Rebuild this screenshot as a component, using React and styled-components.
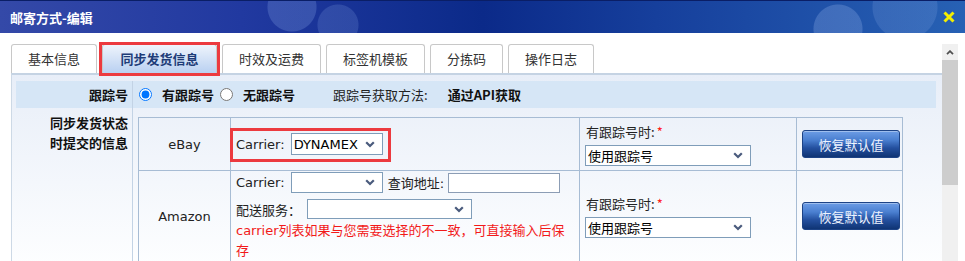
import React from 'react'
import styled, { createGlobalStyle } from 'styled-components'

const GlobalStyle = createGlobalStyle`
  html, body {
    margin: 0;
    background: #fff;
  }
  body {
    font-family: "DejaVu Sans", "Noto Sans CJK SC", sans-serif;
    font-size: 13px;
    color: #222;
  }
`

const Window = styled.div`
  width: 965px;
  height: 261px;
  overflow: hidden;
`

const TitleBar = styled.div`
  height: 33px;
  box-sizing: border-box;
  border-top: 1px solid #0a1e66;
  display: flex;
  align-items: center;
  justify-content: space-between;
  padding: 0 10px;
  background:
    radial-gradient(circle at 292px 6px, rgba(130, 160, 225, 0.28) 0 24px, transparent 25px),
    radial-gradient(circle at 338px 24px, rgba(130, 160, 225, 0.22) 0 20px, transparent 21px),
    radial-gradient(circle at 838px 28px, rgba(150, 180, 235, 0.28) 0 24px, transparent 25px),
    radial-gradient(circle at 905px 6px, rgba(150, 180, 235, 0.18) 0 32px, transparent 33px),
    linear-gradient(90deg, #3449a8 0%, #2139a0 25%, #0b2a89 50%, #163f9c 68%, #2761b4 100%);
`

const Title = styled.h1`
  margin: 0;
  font-family: "Noto Sans CJK SC", sans-serif;
  font-size: 13px;
  font-weight: bold;
  color: #fff;
`

const CloseButton = styled.button`
  border: 0;
  padding: 0;
  background: transparent;
  display: flex;
  cursor: pointer;
`

const Body = styled.div`
  display: flex;
  height: 228px;
  padding-top: 11px;
  box-sizing: border-box;
`

const Main = styled.div`
  margin-left: 11px;
  width: 931px;
  flex: none;
`

const TabList = styled.div`
  display: flex;
  gap: 5px;
  position: relative;
  z-index: 2;
`

const Tab = styled.div`
  position: relative;
  height: 29px;
  box-sizing: border-box;
  line-height: 28px;
  padding: 0 ${p => (p.$active ? 17.5 : 16)}px;
  border: 1px solid #c8c8c8;
  border-bottom: 0;
  border-radius: 3px 3px 0 0;
  background: ${p => (p.$active ? 'linear-gradient(#eef4fc, #b9d0f1)' : '#fff')};
  color: ${p => (p.$active ? '#1e3c78' : '#333')};
  font-family: "Noto Sans CJK SC", sans-serif;
  font-weight: ${p => (p.$active ? 'bold' : 'normal')};
  white-space: nowrap;

  ${p => p.$marked && `
    &::after {
      content: "";
      position: absolute;
      top: -3px;
      left: -4px;
      right: -4px;
      bottom: -3px;
      border: 3px solid #ec3a3f;
    }
  `}
`

const Panel = styled.div`
  border-top: 2px solid #c5d3e3;
  border-left: 1px solid #cdd9e6;
  padding: 6px 6px 0 4px;
  height: 200px;
  background: linear-gradient(180deg, #e8eef8 0%, #fdfeff 190px);
`

const FormGrid = styled.div`
  display: grid;
  grid-template-columns: 117px 1fr;
`

const LabelCell = styled.div`
  box-sizing: border-box;
  border-right: 1px solid #c3d3e5;
  text-align: right;
  padding: ${p => (p.$band ? '0' : '5px')} 4px 0 0;
  line-height: ${p => (p.$band ? '27px' : '20px')};
  font-family: "Noto Sans CJK SC", sans-serif;
  font-weight: bold;
  color: #111;
  background: ${p => (p.$band ? '#d6e6f6' : 'transparent')};
`

const BandContent = styled.div`
  display: flex;
  align-items: center;
  height: 27px;
  padding-left: 6px;
  background: #d6e6f6;
  font-family: "Noto Sans CJK SC", sans-serif;
`

const RadioLabel = styled.label`
  display: inline-flex;
  align-items: center;
  gap: 10px;
  font-weight: bold;
  color: #111;
  margin-right: ${p => p.$gap || 0}px;
`

const Radio = styled.input`
  margin: 0;
  width: 13px;
  height: 13px;
`

const Plain = styled.span`
  color: #222;
  margin-right: ${p => p.$gap || 0}px;
`

const Strong = styled.span`
  font-weight: bold;
  color: #111;
`

const SyncContent = styled.div`
  padding: 9px 0 0 5px;
`

const SyncTable = styled.table`
  border-collapse: collapse;
  table-layout: fixed;
  width: 764px;
  border: 1px solid #a7bcd4;
`

const Row = styled.tr`
  height: ${p => p.$h}px;
`

const Cell = styled.td`
  border: 1px solid #a7bcd4;
  padding: ${p => p.$pad || '0 5px'};
  vertical-align: middle;
  text-align: ${p => p.$align || 'left'};
  color: #222;
`

const Line = styled.div`
  display: flex;
  align-items: center;
  gap: ${p => p.$gap ?? 6}px;
  margin-top: ${p => p.$mt || 0}px;
  white-space: nowrap;
`

const FieldLabel = styled.span`
  margin-right: ${p => p.$mr || 0}px;
  margin-left: ${p => p.$ml || 0}px;
`

const Highlight = styled.div`
  position: relative;
  display: inline-flex;
  align-items: center;
  gap: 6px;

  &::after {
    content: "";
    position: absolute;
    top: -5px;
    left: -6px;
    right: -8px;
    bottom: -7px;
    border: 3px solid #ec3a3f;
  }
`

const SelectBox = styled.div`
  display: inline-flex;
  align-items: center;
  justify-content: space-between;
  box-sizing: border-box;
  width: ${p => p.$w}px;
  height: ${p => p.$h || 21}px;
  border: 1px solid #7f9db9;
  background: #fff;
  padding: 0 7px 0 2px;
  color: #000;
  line-height: 1;
  font-family: ${p => (p.$cjk ? '"Noto Sans CJK SC", sans-serif' : 'inherit')};
`

const TextInput = styled.input`
  box-sizing: border-box;
  width: ${p => p.$w}px;
  height: 20px;
  margin: 0;
  border: 1px solid #8c9db5;
  background: #fff;
  padding: 0 3px;
`

const Note = styled.div`
  margin-top: 2px;
  max-width: 332px;
  color: #f21a1a;
  font-size: 13px;
  line-height: 20px;
  white-space: normal;
`

const StatusLabel = styled.div`
  font-family: "Noto Sans CJK SC", sans-serif;
  line-height: 20px;
  margin: 0 0 3px 1px;
  color: #222;
`

const Required = styled.span`
  color: #ff2020;
  margin-left: 2px;
`

const ResetButton = styled.button`
  width: 98px;
  height: 28px;
  border: 1px solid #1d4386;
  border-radius: 3px;
  background: linear-gradient(#6d9de6 0%, #4a7fd0 35%, #24509f 65%, #0f3474 100%);
  box-shadow: inset 0 1px 0 rgba(255, 255, 255, 0.35);
  color: #eef4ff;
  font-family: "Noto Sans CJK SC", sans-serif;
  font-size: 13px;
  cursor: pointer;
`

const Scrollbar = styled.div`
  width: 16px;
  display: flex;
  flex-direction: column;
`

const ScrollArrow = styled.div`
  height: 16px;
  background: #f0f0f0;
  display: flex;
  align-items: center;
  justify-content: center;
`

const ScrollThumb = styled.div`
  height: 125px;
  background: #cdcdcd;
`

const ScrollTrack = styled.div`
  flex: 1;
  background: #f0f0f0;
`

const Chevron = () => (
  <svg width="10" height="7" viewBox="0 0 10 7">
    <polyline points="1.2,1.2 5,5 8.8,1.2" fill="none" stroke="#4a5b7d" strokeWidth="2.2" />
  </svg>
)

const Select = ({ value, w, h, cjk }) => (
  <SelectBox $w={w} $h={h} $cjk={cjk}>
    <span>{value}</span>
    <Chevron />
  </SelectBox>
)

const tabs = ['基本信息', '同步发货信息', '时效及运费', '标签机模板', '分拣码', '操作日志']

function StatusCell() {
  return (
    <Cell>
      <StatusLabel>
        有跟踪号时:<Required>*</Required>
      </StatusLabel>
      <Select value="使用跟踪号" w={166} cjk />
    </Cell>
  )
}

export default function App() {
  return (
    <Window>
      <GlobalStyle />
      <TitleBar>
        <Title>邮寄方式-编辑</Title>
        <CloseButton aria-label="关闭">
          <svg width="12" height="12" viewBox="0 0 12 12">
            <path d="M1.5 1.5 L10.5 10.5 M10.5 1.5 L1.5 10.5" stroke="#f3ee00" strokeWidth="3" />
          </svg>
        </CloseButton>
      </TitleBar>
      <Body>
        <Main>
          <TabList>
            {tabs.map((t, i) => (
              <Tab key={t} $active={i === 1} $marked={i === 1}>
                {t}
              </Tab>
            ))}
          </TabList>
          <Panel>
            <FormGrid>
              <LabelCell $band>跟踪号</LabelCell>
              <BandContent>
                <RadioLabel $gap={6}>
                  <Radio type="radio" name="track" defaultChecked />
                  有跟踪号
                </RadioLabel>
                <RadioLabel $gap={38}>
                  <Radio type="radio" name="track" />
                  无跟踪号
                </RadioLabel>
                <Plain $gap={20}>跟踪号获取方法:</Plain>
                <Strong>通过API获取</Strong>
              </BandContent>

              <LabelCell>
                同步发货状态
                <br />
                时提交的信息
              </LabelCell>
              <SyncContent>
                <SyncTable>
                  <colgroup>
                    <col style={{ width: 92 }} />
                    <col style={{ width: 349 }} />
                    <col style={{ width: 217 }} />
                    <col style={{ width: 106 }} />
                  </colgroup>
                  <tbody>
                    <Row $h={53}>
                      <Cell $align="center">eBay</Cell>
                      <Cell>
                        <Highlight>
                          <FieldLabel>Carrier:</FieldLabel>
                          <Select value="DYNAMEX" w={92} h={22} />
                        </Highlight>
                      </Cell>
                      <StatusCell />
                      <Cell $align="center">
                        <ResetButton>恢复默认值</ResetButton>
                      </Cell>
                    </Row>
                    <Row $h={90}>
                      <Cell $align="center">Amazon</Cell>
                      <Cell $pad="1px 5px 0">
                        <Line $gap={0}>
                          <FieldLabel $mr={6}>Carrier:</FieldLabel>
                          <Select value="" w={92} />
                          <FieldLabel $ml={5} $mr={4}>查询地址:</FieldLabel>
                          <TextInput $w={112} />
                        </Line>
                        <Line $mt={6}>
                          <FieldLabel>配送服务：</FieldLabel>
                          <Select value="" w={165} h={20} />
                        </Line>
                        <Note>carrier列表如果与您需要选择的不一致，可直接输入后保存</Note>
                      </Cell>
                      <StatusCell />
                      <Cell $align="center">
                        <ResetButton>恢复默认值</ResetButton>
                      </Cell>
                    </Row>
                  </tbody>
                </SyncTable>
              </SyncContent>
            </FormGrid>
          </Panel>
        </Main>
        <Scrollbar>
          <ScrollArrow>
            <svg width="8" height="5" viewBox="0 0 8 5">
              <polyline points="1,4.2 4,1.2 7,4.2" fill="none" stroke="#505050" strokeWidth="1.8" />
            </svg>
          </ScrollArrow>
          <ScrollThumb />
          <ScrollTrack />
        </Scrollbar>
      </Body>
    </Window>
  )
}
